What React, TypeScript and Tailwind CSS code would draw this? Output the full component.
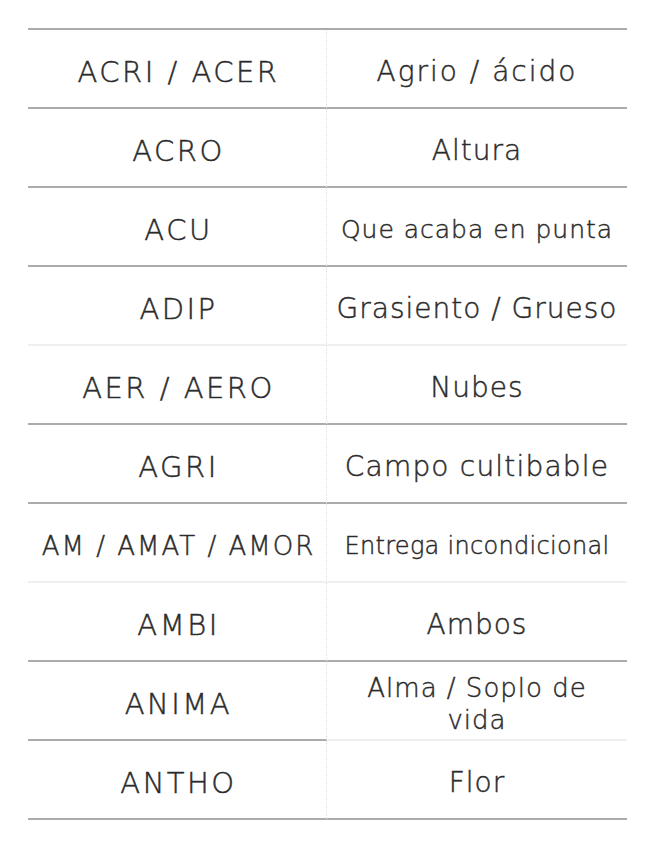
const rows: { a: string; b: string; as: string; bs: string; line: 'dark' | 'light' | 'split' }[] = [
  { a: 'ACRI / ACER', b: 'Agrio / ácido', as: 'text-[29px] tracking-[2.5px]', bs: 'text-[28px] tracking-[2px]', line: 'dark' },
  { a: 'ACRO', b: 'Altura', as: 'text-[29px] tracking-[2.5px]', bs: 'text-[28px] tracking-[1px]', line: 'dark' },
  { a: 'ACU', b: 'Que acaba en punta', as: 'text-[29px] tracking-[2.5px]', bs: 'text-[25px] tracking-[1px]', line: 'dark' },
  { a: 'ADIP', b: 'Grasiento / Grueso', as: 'text-[29px] tracking-[2.5px]', bs: 'text-[28px] tracking-[1px]', line: 'light' },
  { a: 'AER / AERO', b: 'Nubes', as: 'text-[29px] tracking-[2.5px]', bs: 'text-[28px] tracking-[1px]', line: 'dark' },
  { a: 'AGRI', b: 'Campo cultibable', as: 'text-[29px] tracking-[2.5px]', bs: 'text-[28px] tracking-[1.2px]', line: 'dark' },
  { a: 'AM / AMAT / AMOR', b: 'Entrega incondicional', as: 'text-[26px] tracking-[2px]', bs: 'text-[24px] tracking-[0.3px]', line: 'light' },
  { a: 'AMBI', b: 'Ambos', as: 'text-[29px] tracking-[2.5px]', bs: 'text-[28px] tracking-[1px]', line: 'dark' },
  { a: 'ANIMA', b: 'Alma / Soplo de vida', as: 'text-[29px] tracking-[2.5px]', bs: 'text-[26px] tracking-[1px] px-8 leading-[32px]', line: 'split' },
  { a: 'ANTHO', b: 'Flor', as: 'text-[29px] tracking-[2.5px]', bs: 'text-[28px] tracking-[1px]', line: 'dark' },
];

const App = () => {
  return (
    <div className="min-h-[848px] bg-white pt-7" style={{ fontFamily: '"DejaVu Sans", "Open Sans", sans-serif' }}>
      <div className="mx-7 border-t-2 border-[#ababab]">
        <div className="grid grid-cols-[299px_300px]">
          {rows.map((r, i) => {
            const left = r.line === 'light' ? 'border-[#efefef]' : 'border-[#ababab]';
            const right = r.line === 'dark' ? 'border-[#ababab]' : 'border-[#efefef]';
            const lh = r.bs.includes('leading-') ? '' : 'leading-[34px]';
            return [
              <div
                key={`a${i}`}
                className={`flex h-[79px] items-center justify-center whitespace-nowrap border-b-2 border-r border-r-[#dcdcdc] pl-[3px] pt-[7px] text-center font-light leading-[34px] text-[#2b2b2b] [-webkit-text-stroke:0.45px_#2b2b2b] ${left} ${r.as}`}
                style={{ borderRightStyle: 'dotted' }}
              >
                {r.a}
              </div>,
              <div
                key={`b${i}`}
                className={`flex h-[79px] items-center justify-center border-b-2 pt-[7px] text-center font-light text-[#2b2b2b] [-webkit-text-stroke:0.45px_#2b2b2b] ${lh} ${right} ${r.bs}`}
              >
                {r.b}
              </div>,
            ];
          })}
        </div>
      </div>
    </div>
  );
};

export default App;
